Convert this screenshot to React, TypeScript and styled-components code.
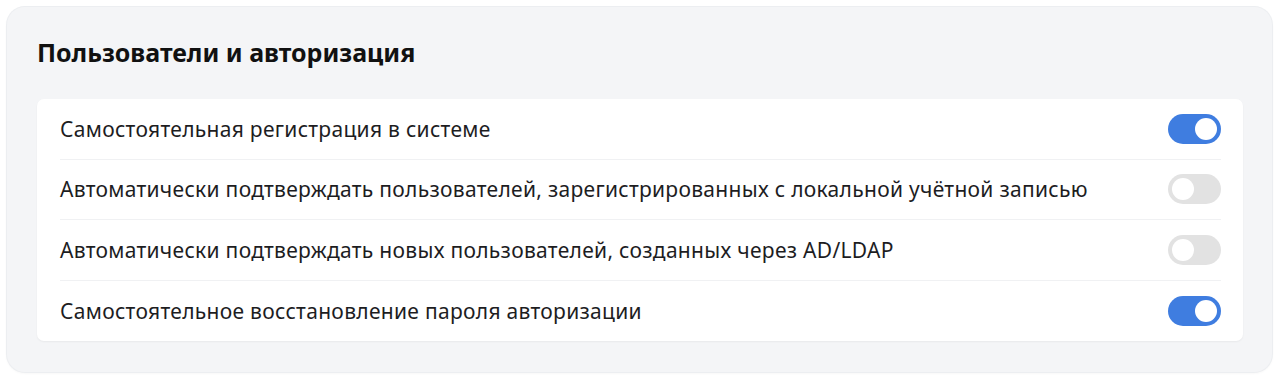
import React, { useState } from "react";
import styled, { createGlobalStyle } from "styled-components";

const Global = createGlobalStyle`
  html, body { margin: 0; padding: 0; background: #ffffff; }
  body { font-family: "Noto Sans", "Open Sans", sans-serif; }
`;

const Page = styled.div`
  padding: 7px 8px 7px 7px;
  box-sizing: border-box;
  width: 1280px;
  height: 379px;
`;

const Panel = styled.section`
  box-sizing: border-box;
  height: 365px;
  background: #f4f5f7;
  border-radius: 18px;
  box-shadow: 0 0 0 1px #eceef1, 0 1px 3px rgba(0, 0, 0, 0.06);
  padding: 28px 29px 31px 30px;
  display: flex;
  flex-direction: column;
`;

const Title = styled.h2`
  margin: 0 0 30px 0;
  font-size: 25px;
  line-height: 34px;
  font-weight: 700;
  color: #111111;
`;

const List = styled.div`
  background: #ffffff;
  border-radius: 7px;
  box-shadow: 0 1px 2px rgba(0, 0, 0, 0.05);
  padding: 0 22px 0 23px;
  display: flex;
  flex-direction: column;
`;

const Row = styled.div<{ $last?: boolean }>`
  height: 60.5px;
  display: flex;
  align-items: center;
  justify-content: space-between;
  border-bottom: ${(p) => (p.$last ? "none" : "1px solid #f0f1f3")};
  box-sizing: border-box;
`;

const Label = styled.span`
  font-size: 21px;
  color: #1d1d1f;
  letter-spacing: 0.3px;
`;

const Track = styled.button<{ $on: boolean }>`
  width: 53px;
  height: 30px;
  border-radius: 15px;
  border: none;
  padding: 0;
  cursor: pointer;
  position: relative;
  background: ${(p) => (p.$on ? "#3f7de0" : "#e2e2e2")};
  flex-shrink: 0;
`;

const Knob = styled.span<{ $on: boolean }>`
  position: absolute;
  top: 4px;
  left: ${(p) => (p.$on ? "27px" : "4px")};
  width: 22px;
  height: 22px;
  border-radius: 50%;
  background: #ffffff;
`;

const items = [
  { label: "Самостоятельная регистрация в системе", on: true },
  { label: "Автоматически подтверждать пользователей, зарегистрированных с локальной учётной записью", on: false },
  { label: "Автоматически подтверждать новых пользователей, созданных через AD/LDAP", on: false },
  { label: "Самостоятельное восстановление пароля авторизации", on: true },
];

export default function App() {
  const [state, setState] = useState(items.map((i) => i.on));
  return (
    <>
      <Global />
      <Page>
        <Panel>
          <Title>Пользователи и авторизация</Title>
          <List>
            {items.map((it, i) => (
              <Row key={i} $last={i === items.length - 1}>
                <Label>{it.label}</Label>
                <Track
                  $on={state[i]}
                  onClick={() => setState((s) => s.map((v, j) => (j === i ? !v : v)))}
                >
                  <Knob $on={state[i]} />
                </Track>
              </Row>
            ))}
          </List>
        </Panel>
      </Page>
    </>
  );
}
